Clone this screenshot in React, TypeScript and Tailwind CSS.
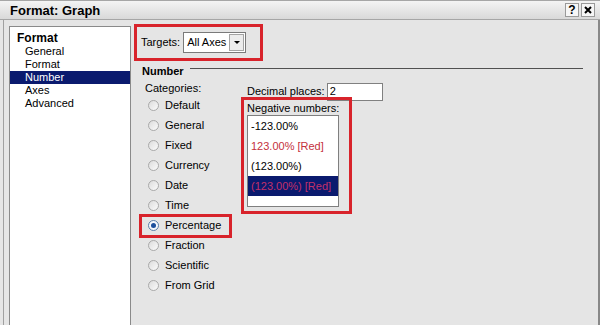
import React from "react";

const categories = [
  "Default",
  "General",
  "Fixed",
  "Currency",
  "Date",
  "Time",
  "Percentage",
  "Fraction",
  "Scientific",
  "From Grid",
];

const treeItems = ["General", "Format", "Number", "Axes", "Advanced"];

function Radio({ checked }: { checked: boolean }) {
  return (
    <span
      className={
        "ml-[3px] w-[11px] h-[11px] rounded-full border flex items-center justify-center shrink-0 " +
        (checked
          ? "border-[#5a7fa8] bg-[#f4f7fb]"
          : "border-[#a9a9a9] bg-linear-to-br from-[#dcdcdc] to-[#fbfbfb]")
      }
    >
      {checked && <span className="w-[5px] h-[5px] rounded-full bg-[#1b4f9c]" />}
    </span>
  );
}

export default function App() {
  return (
    <div className="w-[600px] h-[325px] overflow-hidden bg-[#e5e5e5] flex flex-col font-['Liberation_Sans',Arial,sans-serif] text-[11px] leading-[13px] text-black">
      {/* title bar */}
      <div className="h-[20px] shrink-0 flex items-center justify-between border-t border-b border-[#a6a6a6] bg-linear-to-b from-[#f4f4f4] to-[#d9d9d9] pl-[10px] pr-[5px]">
        <span className="font-bold text-[13px]">Format: Graph</span>
        <div className="flex gap-[2px]">
          <span className="w-[14px] h-[14px] border border-[#9a9a9a] bg-[#f6f6f6] flex items-center justify-center font-bold text-[12px] leading-none">
            ?
          </span>
          <span className="w-[14px] h-[14px] border border-[#9a9a9a] bg-[#f6f6f6] flex items-center justify-center">
            <svg width="8" height="8" viewBox="0 0 8 8">
              <path d="M1 1L7 7M7 1L1 7" stroke="#000" strokeWidth="2" />
            </svg>
          </span>
        </div>
      </div>

      <div className="flex-1 min-h-0 flex ml-[3px] border-l border-[#a0a0a0] pl-[5px] border-r-2 border-r-[#888888]">
        {/* tree */}
        <div className="w-[122px] shrink-0 mt-[6px] bg-white border-t border-l border-r border-[#8a8a8a] pt-[5px]">
          <div className="pl-[7px] font-bold text-[12px]">Format</div>
          {treeItems.map((t) => (
            <div
              key={t}
              className={
                "pl-[15px] " + (t === "Number" ? "bg-[#0a1a6e] text-white" : "")
              }
            >
              {t}
            </div>
          ))}
        </div>

        {/* settings */}
        <div className="flex-1 pl-[3px] pt-[4px] pr-[15px]">
          <div className="w-[129px] h-[37px] border-[3px] border-[#d8232b] flex items-center pl-[4px] gap-[3px]">
            <span>Targets:</span>
            <div className="w-[63px] h-[21px] border border-[#7a7a7a] bg-white flex items-center justify-between pl-[3px] pr-px">
              <span>All Axes</span>
              <span className="w-[15px] h-[17px] bg-[#ececec] border border-[#a3a3a3] flex items-center justify-center">
                <span className="w-0 h-0 border-l-[3px] border-r-[3px] border-t-[3px] border-l-transparent border-r-transparent border-t-black" />
              </span>
            </div>
          </div>

          <div className="mt-[4px] flex items-start pl-[8px]">
            <span className="font-bold">Number</span>
            <div className="flex-1 h-px bg-[#505050] mt-[3px] ml-[6px]" />
          </div>

          <div className="flex mt-[4px]">
            <div className="w-[107px] pl-[11px] shrink-0">
              <div>Categories:</div>
              {categories.map((c) => (
                <div key={c} className="relative h-[20px] flex items-center gap-[6px]">
                  <Radio checked={c === "Percentage"} />
                  <span>{c}</span>
                  {c === "Percentage" && (
                    <span className="absolute left-[-6px] top-[-1px] w-[93px] h-[24px] border-[3px] border-[#d8232b]" />
                  )}
                </div>
              ))}
            </div>

            <div className="flex flex-col">
              <div className="h-[19px] flex items-center pl-[6px]">
                <span>Decimal places:</span>
                <span className="ml-[2px] w-[56px] h-[18px] border border-[#808080] bg-white flex items-center px-[2px]">
                  2
                </span>
              </div>
              <div className="-mt-[4px] w-[111px] border-[3px] border-[#d8232b] pl-[3px] pt-[2px] pb-[4px]">
                <div>Negative numbers:</div>
                <div className="w-[92px] h-[92px] border border-[#7f7f7f] bg-white">
                  <div className="h-[20px] flex items-center pl-[3px]">-123.00%</div>
                  <div className="h-[20px] flex items-center pl-[3px] text-[#c4303c]">
                    123.00% [Red]
                  </div>
                  <div className="h-[20px] flex items-center pl-[3px]">(123.00%)</div>
                  <div className="h-[20px] flex items-center pl-[3px] bg-[#0a1a6e] text-[#c2306a]">
                    (123.00%) [Red]
                  </div>
                </div>
              </div>
            </div>
          </div>
        </div>
      </div>
    </div>
  );
}
